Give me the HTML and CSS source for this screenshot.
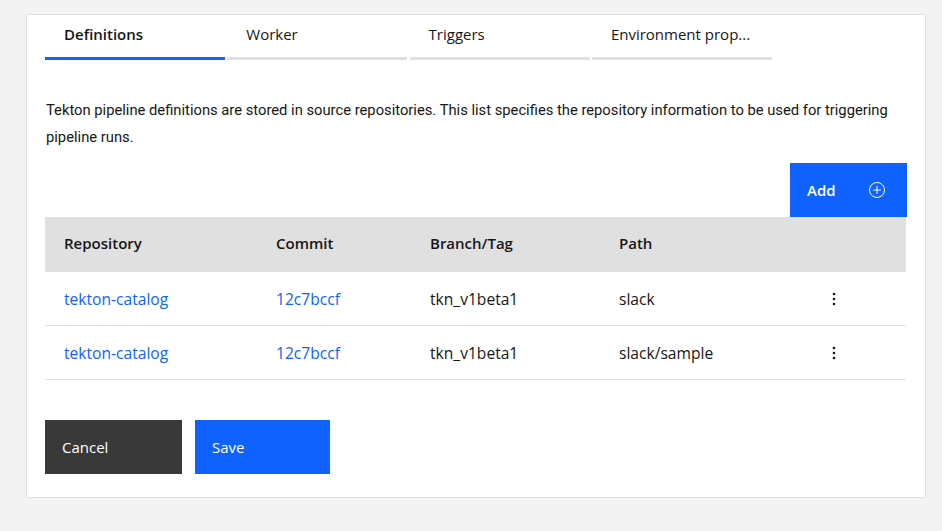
FILE: index.html
```html
<!DOCTYPE html>
<html lang="en">
<head>
<meta charset="utf-8">
<title>Definitions</title>
<link rel="stylesheet" href="styles.css">
</head>
<body>
<div class="card">
  <div class="tabs">
    <div class="tab active">Definitions</div>
    <div class="tab">Worker</div>
    <div class="tab">Triggers</div>
    <div class="tab">Environment prop...</div>
  </div>
  <p class="desc">Tekton pipeline definitions are stored in source repositories. This list specifies the repository information to be used for triggering pipeline runs.</p>
  <div class="toolbar">
    <button class="btn-add">Add
      <svg class="add-icon" width="16" height="16" viewBox="0 0 16 16"><circle cx="8" cy="8" r="7.5" fill="none" stroke="#fff" stroke-width="1"/><path d="M8 4v8M4 8h8" stroke="#fff" stroke-width="1"/></svg>
    </button>
  </div>
  <div class="table">
    <div class="row head">
      <div class="cell">Repository</div>
      <div class="cell">Commit</div>
      <div class="cell">Branch/Tag</div>
      <div class="cell">Path</div>
      <div class="cell"></div>
    </div>
    <div class="row">
      <div class="cell link">tekton-catalog</div>
      <div class="cell link">12c7bccf</div>
      <div class="cell">tkn_v1beta1</div>
      <div class="cell">slack</div>
      <div class="cell"><svg class="menu" width="16" height="16" viewBox="0 0 16 16"><circle cx="8" cy="3" r="1.3"/><circle cx="8" cy="8" r="1.3"/><circle cx="8" cy="13" r="1.3"/></svg></div>
    </div>
    <div class="row">
      <div class="cell link">tekton-catalog</div>
      <div class="cell link">12c7bccf</div>
      <div class="cell">tkn_v1beta1</div>
      <div class="cell">slack/sample</div>
      <div class="cell"><svg class="menu" width="16" height="16" viewBox="0 0 16 16"><circle cx="8" cy="3" r="1.3"/><circle cx="8" cy="8" r="1.3"/><circle cx="8" cy="13" r="1.3"/></svg></div>
    </div>
  </div>
  <div class="actions">
    <button class="btn btn-cancel">Cancel</button>
    <button class="btn btn-save">Save</button>
  </div>
</div>
</body>
</html>
```
FILE: styles.css
```css
* { box-sizing: border-box; }
body {
  margin: 0;
  background: #f3f3f3;
  font-family: "Open Sans", "Noto Sans", sans-serif;
  color: #161616;
}
.card {
  margin: 14px 0 0 26px;
  width: 900px;
  height: 484px;
  background: #fff;
  border: 1px solid #e0e0e0;
  padding: 0 18px 0 18px;
}
.tabs {
  display: flex;
  gap: 2.3px;
}
.tab {
  width: 180px;
  height: 45px;
  padding: 9px 0 0 19px;
  line-height: 20px;
  font-size: 15px;
  border-bottom: 3px solid #e0e0e0;
  color: #161616;
  white-space: nowrap;
}
.tab.active {
  border-bottom-color: #0f62fe;
  font-weight: 600;
}
.desc {
  margin: 37px 0 0 1px;
  font-family: Roboto, "Liberation Sans", sans-serif;
  font-size: 14.75px;
  line-height: 27px;
  color: #161616;
}
.toolbar {
  display: flex;
  justify-content: flex-end;
  margin-top: 12px;
}
.btn-add {
  width: 117px;
  height: 54px;
  border: 0;
  background: #0f62fe;
  color: #fff;
  font-family: inherit;
  font-size: 15px;
  font-weight: 600;
  display: flex;
  align-items: center;
  justify-content: space-between;
  padding: 0 22px 0 17px;
}
.table { width: 861px; }
.row {
  display: grid;
  grid-template-columns: 212px 154px 189px 207px 99px;
  height: 54px;
  border-bottom: 1px solid #e0e0e0;
  align-items: center;
  font-size: 15.6px;
}
.row.head {
  background: #e0e0e0;
  font-weight: 600;
  font-size: 15px;
  height: 55px;
  padding-bottom: 4px;
  border-bottom: 0;
}
.cell {
  padding-left: 19px;
  white-space: nowrap;
  display: flex;
  align-items: center;
}
.link { color: #0f62fe; }
.menu { fill: #161616; }
.actions {
  display: flex;
  gap: 13px;
  margin-top: 40px;
}
.btn {
  height: 54px;
  border: 0;
  color: #fff;
  font-family: inherit;
  font-size: 15px;
  text-align: left;
  padding: 0 17px;
}
.btn-cancel { width: 137px; background: #393939; }
.btn-save { width: 135px; background: #0f62fe; }
```
